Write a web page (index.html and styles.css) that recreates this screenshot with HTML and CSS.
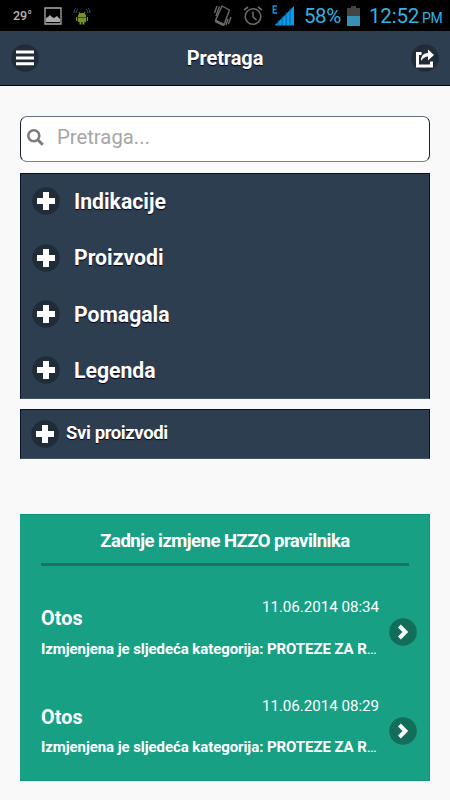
FILE: index.html
```html
<!DOCTYPE html>
<html lang="hr">
<head>
<meta charset="utf-8">
<title>Pretraga</title>
<link rel="stylesheet" href="styles.css">
</head>
<body>
<svg class="defs" width="0" height="0" aria-hidden="true">
  <symbol id="plus" viewBox="0 0 28 28"><circle cx="14" cy="14" r="13.8" fill="#202c38"/><path d="M11 5h6v6h6v6h-6v6h-6v-6H5v-6h6z" fill="#fff"/></symbol>
  <symbol id="next" viewBox="0 0 28 28"><circle cx="14" cy="14" r="13.8" fill="#126d5b"/><path d="M10.4 8l6 6-6 6" fill="none" stroke="#fff" stroke-width="4"/></symbol>
</svg>
<div class="status">
  <span class="temp">29°</span>
  <svg class="photo" width="18" height="18" viewBox="0 0 18 18"><path d="M1 1h16v16H1z" fill="none" stroke="#aaa" stroke-width="1.3"/><path d="M2 15v-4l2-1 2-2 2 2 2 1 3-2 3 3v3z" fill="#aaa"/></svg>
  <svg class="droid" width="18" height="18" viewBox="0 0 18 18"><g fill="#78902c"><path d="M5 10V9q0-3 4-3t4 3v1zM5 10.5h8V15H5zM3 10h1.3v4H3zm10.700 0H15v4h-1.300zM6.500 15h2v2.500h-2zm3 0h2v2.500h-2z"/></g><path d="M6 5l1 2m5-2l-1 2" stroke="#78902c"/><path d="M1 6q0-4 2-5m0 5q0-3 2-4M17 6q0-4-2-5m0 5q0-3-2-4" fill="none" stroke="#245778"/></svg>
  <svg class="vibrate" width="20" height="22" viewBox="0 0 20 22"><g fill="none" stroke="#6a6a6a" stroke-width="1.400"><path d="M9 1l7.500 4-5.500 15-8.500-4.500z"/><path d="M2.500 16l8.500 4" stroke-width="2.800"/><path d="M4 1L1.500 8m5-6.500L3 11m12 3l-2 6m5-8l-2.500 7"/></g></svg>
  <svg class="alarm" width="20" height="20" viewBox="0 0 20 20"><g fill="none" stroke="#6a6a6a" stroke-width="1.600"><circle cx="10" cy="10.500" r="7.800"/><path d="M10 5.500v5.500l3.500 3M1 4l4-3M19 4l-4-3"/></g></svg>
  <svg class="signal" width="22" height="21" viewBox="0 0 22 21"><path d="M2.500 20.500L22 1v19.500z" fill="#0a98e8"/><path d="M6.300 21V15M10.200 21V11M14.100 21V7M18 21V3" stroke="#04568a" stroke-width=".8"/><path d="M5 1H1.200v7H5M1 4.500h3.500" fill="none" stroke="#0a98e8" stroke-width="1.300"/></svg>
  <span class="percent">58%</span>
  <svg class="battery" width="13" height="20" viewBox="0 0 13 20"><path d="M4 0h5v2h4v18H0V2h4z" fill="#444"/><path d="M0 10h13v10H0z" fill="#368fb5"/></svg>
  <span class="clock">12:52</span><span class="pm">PM</span>
</div>
<header class="bar">
  <svg width="28" height="28" viewBox="0 0 28 28"><circle cx="14" cy="14" r="13.700" fill="#202c38"/><path d="M5 8h18M5 13.900h18M5 19.700h18" stroke="#fff" stroke-width="3"/></svg>
  <h1>Pretraga</h1>
  <svg width="28" height="28" viewBox="0 0 28 28"><circle cx="14" cy="14" r="13.700" fill="#202c38"/><path d="M10.500 9.500H6.500v12.500h14V17.500" fill="none" stroke="#fff" stroke-width="3"/><path d="M10 17q0-8 7-8V5.500l6 5.500-6 5.500v-4q-4 0-7 4.500z" fill="#fff"/></svg>
</header>
<main>
  <div class="search">
    <svg width="17" height="17" viewBox="0 0 17 17"><circle cx="6.800" cy="6.800" r="5.500" fill="none" stroke="#7c7c7c" stroke-width="2.600"/><path d="M10.500 10.500l5.300 5.300" stroke="#7c7c7c" stroke-width="3"/></svg>
    <span>Pretraga...</span>
  </div>
  <nav class="menu">
    <a class="item"><svg class="round"><use href="#plus"/></svg><span>Indikacije</span></a>
    <a class="item"><svg class="round"><use href="#plus"/></svg><span>Proizvodi</span></a>
    <a class="item"><svg class="round"><use href="#plus"/></svg><span>Pomagala</span></a>
    <a class="item"><svg class="round"><use href="#plus"/></svg><span>Legenda</span></a>
  </nav>
  <a class="all"><svg class="round"><use href="#plus"/></svg><span>Svi proizvodi</span></a>
  <section class="news">
    <h2><span>Zadnje izmjene HZZO pravilnika</span></h2>
    <article class="entry">
      <div class="copy"><time>11.06.2014 08:34</time><h3>Otos</h3><p>Izmjenjena je sljedeća kategorija: PROTEZE ZA R<span class="dots">…</span></p></div>
      <svg class="round"><use href="#next"/></svg>
    </article>
    <article class="entry">
      <div class="copy"><time>11.06.2014 08:29</time><h3>Otos</h3><p>Izmjenjena je sljedeća kategorija: PROTEZE ZA R<span class="dots">…</span></p></div>
      <svg class="round"><use href="#next"/></svg>
    </article>
  </section>
</main>
</body>
</html>
```
FILE: styles.css
```css
* { box-sizing: border-box; }
body { margin: 0; height: 800px; overflow: hidden; background: #f9f9f9; color: #fff; font-family: Roboto, sans-serif; }
h1, h2, h3, p { margin: 0; }
svg { display: block; flex: none; }
.defs { position: absolute; }
.round { width: 28px; height: 28px; }

.status { height: 31px; display: flex; align-items: center; background: #000; color: #35b1e1; white-space: nowrap; }
.temp { width: 31px; margin-left: 13px; color: #b4b4b4; font-size: 12.5px; font-weight: 500; }
.droid { margin-left: 11px; }
.vibrate { margin-left: 122px; }
.alarm { margin-left: 10px; }
.signal { margin-left: 9px; }
.percent { width: 37px; margin-left: 10px; font-size: 20.5px; line-height: 31px; letter-spacing: -.4px; padding-top: 2px; }
.battery { margin-left: 6px; }
.clock { width: 49px; margin-left: 9px; font-size: 20.5px; letter-spacing: -.2px; line-height: 31px; padding-top: 2px; }
.pm { margin-left: 4px; font-size: 14px; letter-spacing: -.3px; padding-top: 5px; }

.bar { height: 55px; padding: 0 11px; display: flex; justify-content: space-between; align-items: center; background: #2d3e50; border-bottom: 1px solid #000020; }
.bar h1 { font-size: 20px; line-height: 24px; letter-spacing: -.1px; text-shadow: 0 1px 1px #000020; }

main { padding: 30px 20px 0; }
.search { height: 46px; display: flex; align-items: center; gap: 13px; padding-left: 6px; background: #fff; border: 1px solid #1a2430; border-top-color: #63707f; border-bottom-color: #7b8088; border-radius: 7px; color: #a6a6a6; font-size: 20.3px; }
.search svg { margin-top: -3px; }
.search span { margin-top: -5px; }
.menu { margin-top: 10.500px; height: 226.500px; background: #2d3e50; border: 1px solid #06122c; border-bottom-color: #455465; }
.item { height: 56.25px; padding-left: 11px; display: flex; align-items: center; gap: 14px; font-size: 21.2px; font-weight: 700; }
.item .round { margin-top: -.5px; }
.item, .all { text-shadow: 0 1px 1px #000020; }
.all { height: 50px; margin-top: 10px; padding-left: 10px; display: flex; align-items: center; gap: 7.500px; background: #2d3e50; border: 1px solid #06122c; border-bottom-color: #455465; font-size: 18.5px; letter-spacing: -.4px; font-weight: 700; }
.all span { margin-top: -2px; }
.all .round { margin: -.5px 0 0 -.5px; }

.news { height: 267px; margin-top: 55px; padding: 0 12px 0 21px; background: #18a085; border: 1px solid #089879; border-width: 1px 1px 1px 0; }
.news h2 { height: 51px; margin-right: 8px; padding-top: 14px; border-bottom: 3px solid #216f66; text-align: center; font-size: 18.5px; letter-spacing: -.52px; line-height: 24px; }
.entry { height: 98.5px; display: flex; justify-content: space-between; }
.news h2 + .entry { margin-top: 19px; }
.entry .round { margin-top: 33px; }
.copy { width: 338px; padding-top: 13px; }
.copy time { display: block; text-align: right; font-size: 15.2px; letter-spacing: -.05px; line-height: 18px; }
.copy h3 { margin-top: -9px; font-size: 19.7px; letter-spacing: .15px; line-height: 24px; }
.copy p { margin-top: 8.500px; font-size: 15px; letter-spacing: -.08px; font-weight: 700; line-height: 18px; white-space: nowrap; }
.dots { font-weight: 400; letter-spacing: -1px; }
```
